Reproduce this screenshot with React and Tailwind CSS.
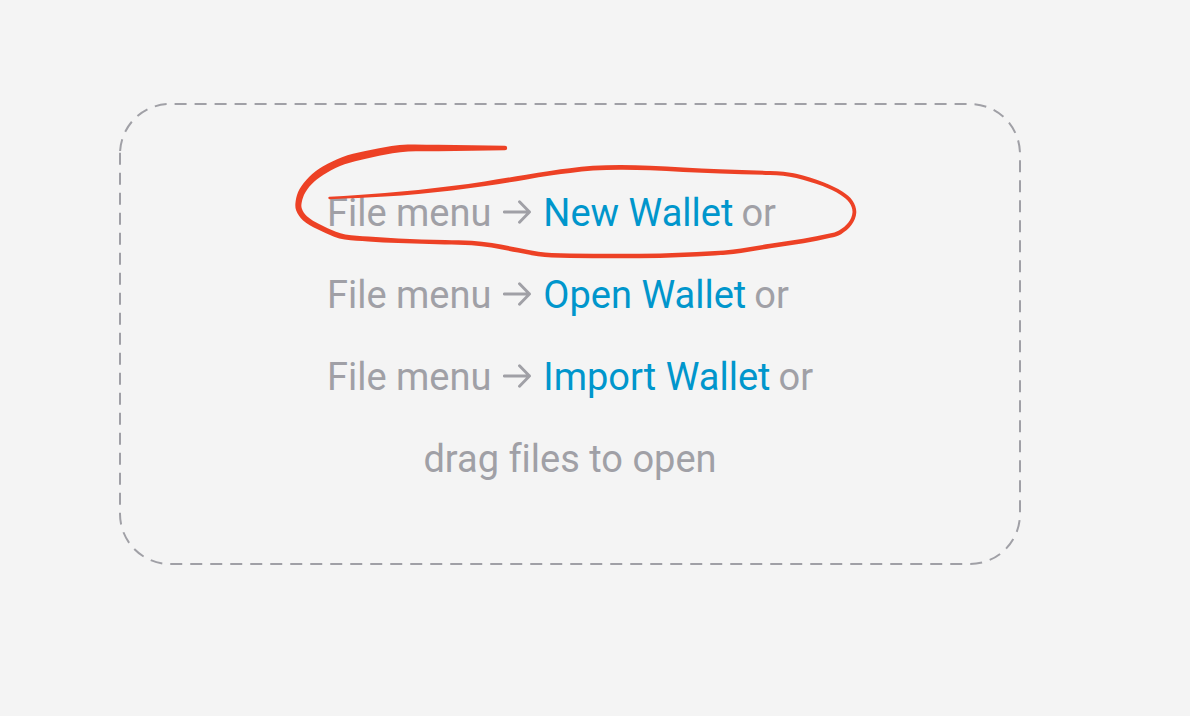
import React from "react";

const actions = ["New Wallet", "Open Wallet", "Import Wallet"];

// Pen stroke samples: x, y, thickness.
const pen = [
  [505, 148, 4.4], [472, 148, 5.6], [438, 148, 6.4], [408, 148, 7], [392, 149.7, 7.4],
  [365, 155, 7.6], [343.3, 160.7, 7.6], [325, 169.5, 7.4], [311.7, 179.3, 7], [302.3, 191, 6.6],
  [298.7, 201.7, 6.2], [299, 209.5, 6], [305, 218.3, 5.8], [318.3, 226.7, 5.4], [335, 234.3, 5.2],
  [345, 237, 5], [368.3, 239, 4.8], [398.3, 240.7, 4.6], [445, 242.3, 4.6], [471.7, 243, 4.6],
  [491.7, 245.3, 4.6], [518.3, 250.3, 4.6], [538.3, 254, 4.6], [551.7, 255.3, 4.5], [570, 255.7, 4.5],
  [616.7, 256, 4.5], [660, 255.7, 4.5], [696.7, 254.3, 4.5], [733.3, 251.7, 4.5], [770, 246, 4.5],
  [803.3, 241, 4.4], [830, 235.7, 4.4], [840, 232.3, 4.3], [850, 223.7, 4], [854.4, 212.3, 3.8],
  [851, 201.7, 3.8], [841.7, 193.3, 3.8], [823.3, 184.3, 3.8], [796.7, 176, 4], [783.3, 173.7, 4],
  [770, 173, 4], [720, 171.3, 4.2], [683.3, 169.7, 4.4], [650, 168, 4.6], [620, 167.4, 4.8],
  [593, 168.2, 4.8], [570, 170.7, 4.8], [551.7, 173, 4.8], [525, 177.3, 4.8], [485, 183.7, 4.6],
  [451.7, 188.3, 4.4], [418.3, 192, 4], [385, 194.8, 3.6], [358, 196.5, 3], [329.5, 198, 2.4],
];

function curve(points) {
  let d = "";
  for (let i = 0; i < points.length - 1; i++) {
    const p0 = points[i - 1] || points[i];
    const p1 = points[i];
    const p2 = points[i + 1];
    const p3 = points[i + 2] || p2;
    const len = Math.hypot(p2[0] - p1[0], p2[1] - p1[1]) / 3;
    const m1 = Math.hypot(p2[0] - p0[0], p2[1] - p0[1]) || 1;
    const m2 = Math.hypot(p3[0] - p1[0], p3[1] - p1[1]) || 1;
    const a = [p1[0] + ((p2[0] - p0[0]) / m1) * len, p1[1] + ((p2[1] - p0[1]) / m1) * len];
    const b = [p2[0] - ((p3[0] - p1[0]) / m2) * len, p2[1] - ((p3[1] - p1[1]) / m2) * len];
    d += ` C${a.join(" ")} ${b.join(" ")} ${p2.join(" ")}`;
  }
  return d;
}

function outline(samples) {
  const side = (sign) =>
    samples.map(([x, y, w], i) => {
      const p = samples[i - 1] || samples[i];
      const n = samples[i + 1] || samples[i];
      const m = Math.hypot(n[0] - p[0], n[1] - p[1]);
      return [x - (sign * (n[1] - p[1]) * w) / (2 * m), y + (sign * (n[0] - p[0]) * w) / (2 * m)];
    });
  const left = side(1);
  const right = side(-1).reverse();
  const endR = samples[samples.length - 1][2] / 2;
  const startR = samples[0][2] / 2;
  return `M${left[0].join(" ")}${curve(left)} A${endR} ${endR} 0 0 0 ${right[0].join(" ")}${curve(right)} A${startR} ${startR} 0 0 0 ${left[0].join(" ")}Z`;
}

const penPath = outline(pen);

function DashedFrame() {
  return (
    <svg
      className="pointer-events-none absolute inset-0 h-full w-full overflow-visible"
      viewBox="0 0 900 460"
      preserveAspectRatio="none"
      fill="none"
      aria-hidden="true"
    >
      <path
        d="M0.1 47A50 50 0 0 1 50 0H850A50 50 0 0 1 900 50V410A50 50 0 0 1 850 460H50A50 50 0 0 1 0 410V47"
        stroke="#a0a0a6"
        strokeWidth="2"
        strokeDasharray="12 8"
      />
    </svg>
  );
}

function PenMark() {
  return (
    <svg
      className="pointer-events-none absolute -top-[52px] -left-8 h-[120px] w-[570px]"
      viewBox="295 140 570 120"
      aria-hidden="true"
    >
      <path d={penPath} fill="#ed4125" />
    </svg>
  );
}

function Arrow() {
  return (
    <svg className="h-7 w-7 shrink-0" viewBox="0 0 28 28" fill="none" aria-hidden="true">
      <path
        d="M1.3 13H26.5M16.5 2.7L26.5 13L16.5 23.3"
        stroke="currentColor"
        strokeWidth="2.9"
        strokeLinecap="round"
        strokeLinejoin="round"
      />
    </svg>
  );
}

export default function App() {
  return (
    <main className="min-h-screen bg-[#f4f4f4] pt-[104px] pr-[168px] pb-[152px] pl-[120px] font-['Roboto',sans-serif] text-[38px] leading-[42px] text-[#a0a0a6] [font-variant-ligatures:none]">
      <section className="relative mr-[2px] flex min-h-[460px] justify-center pt-[88px]">
        <DashedFrame />
        <div className="relative flex w-fit flex-col gap-10 whitespace-nowrap">
          {actions.map((name) => (
            <p key={name} className="flex items-center">
              <span>File menu</span>
              <span className="mx-3 flex">
                <Arrow />
              </span>
              <a href="#" className="mr-2 text-[#0096cc]">
                {name}
              </a>
              <span>or</span>
            </p>
          ))}
          <p className="text-center">drag files to open</p>
          <PenMark />
        </div>
      </section>
    </main>
  );
}
